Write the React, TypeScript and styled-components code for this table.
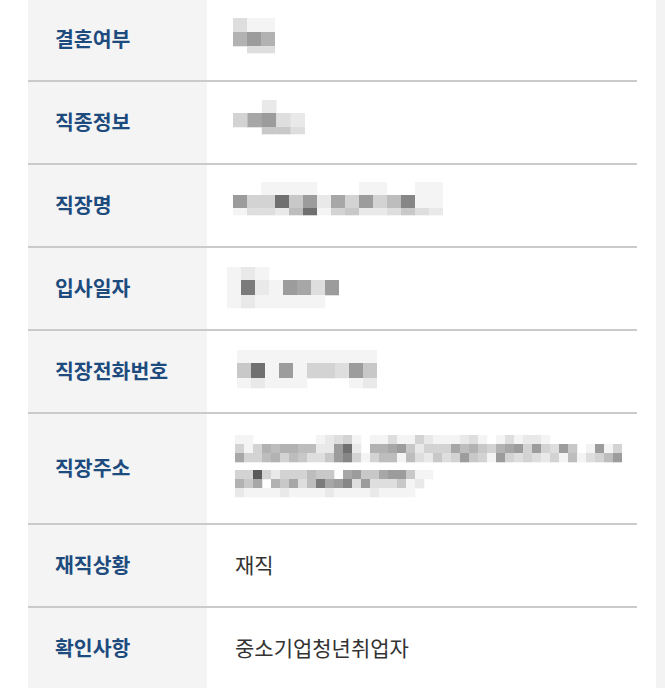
import React from "react";
import styled, { createGlobalStyle } from "styled-components";

const GlobalStyle = createGlobalStyle`
  html, body {
    margin: 0;
    padding: 0;
    background: #ffffff;
    overflow: hidden;
  }
  body {
    font-family: "Noto Sans CJK KR", "Noto Sans", sans-serif;
  }
`;

const Page = styled.div`
  display: flex;
  width: 665px;
  height: 688px;
  overflow: hidden;
`;

const Content = styled.div`
  flex: 1;
  padding: 0 19px 0 28px;
`;

const Strip = styled.div`
  width: 9px;
  background: #f3f3f3;
`;

const Table = styled.div`
  display: flex;
  flex-direction: column;
  margin-top: -1px;
`;

const Row = styled.div<{ $h: number }>`
  display: grid;
  grid-template-columns: 179px 1fr;
  height: ${(p) => p.$h}px;
  border-bottom: 2px solid #cacaca;
  flex-shrink: 0;
`;

const Label = styled.div`
  display: flex;
  align-items: center;
  padding: 0 0 3px 27px;
  background: #f4f4f4;
  color: #1d4b7e;
  font-size: 20.5px;
  font-weight: 700;
  line-height: 1;
`;

const Value = styled.div<{ $text?: boolean }>`
  display: flex;
  align-items: center;
  padding: ${(p) => (p.$text ? "0 0 3px 28px" : "0")};
  color: #333333;
  font-size: 21px;
  font-weight: 400;
  line-height: 1;
`;

const LEVELS = "0123456789abcdefg";
const gray = (ch: string) => {
  const n = LEVELS.indexOf(ch);
  const v = 255 - n * 11;
  return `rgb(${v},${v},${v})`;
};

type MRow = { y: number; h: number; d: string };

const Mosaic: React.FC<{ x: number; cw: number; h: number; rows: MRow[] }> = ({
  x,
  cw,
  h,
  rows,
}) => {
  const cols = Math.max(...rows.map((r) => r.d.length));
  const w = Math.ceil(x + cols * cw);
  return (
    <svg width={w} height={h} viewBox={`0 0 ${w} ${h}`} aria-hidden="true">
      {rows.map((r, ri) =>
        r.d.split("").map((ch, ci) =>
          ch === "0" ? null : (
            <rect
              key={`${ri}-${ci}`}
              x={x + ci * cw}
              y={r.y}
              width={cw + 0.3}
              height={r.h + 0.3}
              fill={gray(ch)}
            />
          )
        )
      )}
    </svg>
  );
};

type Item =
  | { label: string; h: number; text: string }
  | { label: string; h: number; x: number; cw: number; rows: MRow[] };

const items: Item[] = [
  {
    label: "결혼여부",
    h: 81,
    x: 26,
    cw: 14,
    rows: [
      { y: 19, h: 14, d: "311" },
      { y: 33, h: 14, d: "797" },
      { y: 47, h: 7, d: "033" },
    ],
  },
  {
    label: "직종정보",
    h: 81,
    x: 26,
    cw: 14.4,
    rows: [
      { y: 18, h: 13, d: "00200" },
      { y: 31, h: 14, d: "48932" },
      { y: 45, h: 7, d: "00553" },
    ],
  },
  {
    label: "직장명",
    h: 81,
    x: 26,
    cw: 14,
    rows: [
      { y: 17, h: 13, d: "001111000110011" },
      { y: 30, h: 13, d: "944d59284946b11" },
      { y: 43, h: 7, d: "13326d145223532" },
    ],
  },
  {
    label: "입사일자",
    h: 81,
    x: 20,
    cw: 14,
    rows: [
      { y: 19, h: 13, d: "12100000" },
      { y: 32, h: 15, d: "1c219839" },
      { y: 47, h: 13, d: "12111110" },
    ],
  },
  {
    label: "직장전화번호",
    h: 81,
    x: 30,
    cw: 14,
    rows: [
      { y: 19, h: 13, d: "1111111111" },
      { y: 32, h: 15, d: "5d19144395" },
      { y: 47, h: 10, d: "1211100012" },
    ],
  },
  {
    label: "직장주소",
    h: 109,
    x: 28,
    cw: 9,
    rows: [
      { y: 21, h: 9, d: "1100000001" + "2341" + "011" + "3114" + "2111" + "2310" + "1312" + "21" + "00000000" },
      { y: 30, h: 9, d: "4147677662" + "29d2077895" + "2444867547" + "8949439501" + "914" },
      { y: 39, h: 9, d: "8446746533" + "59b4146616" + "3253495419" + "4343241613" + "469" },
      { y: 56, h: 9, d: "44f4244465" + "5089558995" + "110" },
      { y: 65, h: 9, d: "758075836c" + "89b3933351" + "200" },
      { y: 74, h: 9, d: "21111211112111121111000" },
    ],
  },
  { label: "재직상황", h: 81, text: "재직" },
  { label: "확인사항", h: 81, text: "중소기업청년취업자" },
];

export default function App() {
  return (
    <>
      <GlobalStyle />
      <Page>
        <Content>
          <Table>
            {items.map((it) => (
              <Row key={it.label} $h={it.h}>
                <Label>{it.label}</Label>
                {"text" in it ? (
                  <Value $text>{it.text}</Value>
                ) : (
                  <Value>
                    <Mosaic x={it.x} cw={it.cw} h={it.h} rows={it.rows} />
                  </Value>
                )}
              </Row>
            ))}
          </Table>
        </Content>
        <Strip />
      </Page>
    </>
  );
}
